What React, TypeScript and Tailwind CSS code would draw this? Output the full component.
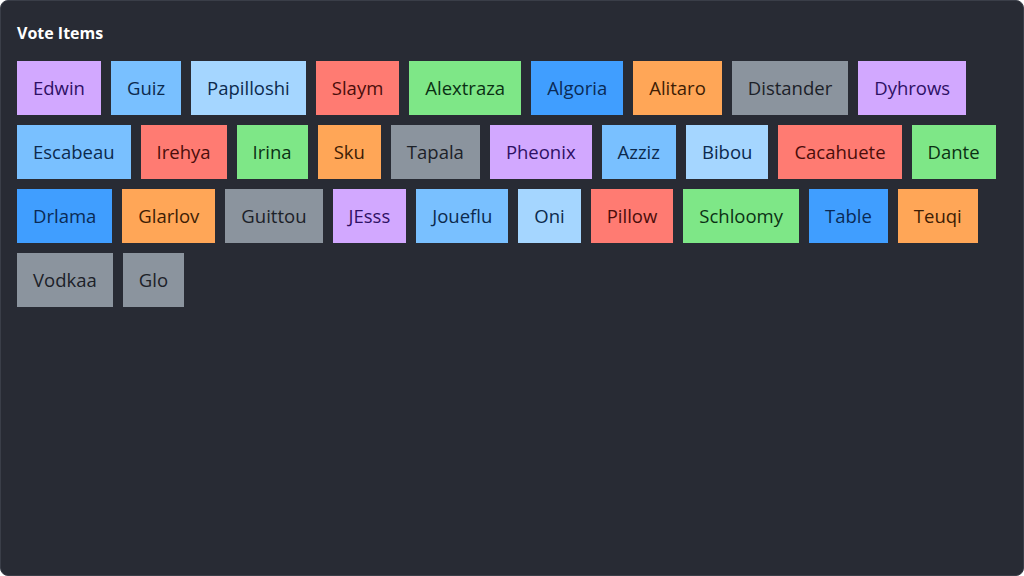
const palette = {
  purple: "bg-[#d2a8ff] text-[#2e1065]",
  sky: "bg-[#79c0ff] text-[#0c2a4d]",
  pale: "bg-[#a5d6ff] text-[#0c2a4d]",
  red: "bg-[#ff7b72] text-[#4a0d0a]",
  green: "bg-[#7ee787] text-[#0b3014]",
  blue: "bg-[#409eff] text-[#0a2a55]",
  orange: "bg-[#ffa657] text-[#3d1d05]",
  gray: "bg-[#8b949e] text-[#1c2128]",
};

type Tone = keyof typeof palette;

const items: { name: string; tone: Tone }[] = [
  { name: "Edwin", tone: "purple" },
  { name: "Guiz", tone: "sky" },
  { name: "Papilloshi", tone: "pale" },
  { name: "Slaym", tone: "red" },
  { name: "Alextraza", tone: "green" },
  { name: "Algoria", tone: "blue" },
  { name: "Alitaro", tone: "orange" },
  { name: "Distander", tone: "gray" },
  { name: "Dyhrows", tone: "purple" },
  { name: "Escabeau", tone: "sky" },
  { name: "Irehya", tone: "red" },
  { name: "Irina", tone: "green" },
  { name: "Sku", tone: "orange" },
  { name: "Tapala", tone: "gray" },
  { name: "Pheonix", tone: "purple" },
  { name: "Azziz", tone: "sky" },
  { name: "Bibou", tone: "pale" },
  { name: "Cacahuete", tone: "red" },
  { name: "Dante", tone: "green" },
  { name: "Drlama", tone: "blue" },
  { name: "Glarlov", tone: "orange" },
  { name: "Guittou", tone: "gray" },
  { name: "JEsss", tone: "purple" },
  { name: "Joueflu", tone: "sky" },
  { name: "Oni", tone: "pale" },
  { name: "Pillow", tone: "red" },
  { name: "Schloomy", tone: "green" },
  { name: "Table", tone: "blue" },
  { name: "Teuqi", tone: "orange" },
  { name: "Vodkaa", tone: "gray" },
  { name: "Glo", tone: "gray" },
];

export default function App() {
  return (
    <div className="h-screen w-full overflow-hidden rounded-lg border border-[#3a3e48] bg-[#282b34] px-4 pt-5 font-['Open_Sans','Noto_Sans',sans-serif]">
      {/* header */}
      <h1 className="mb-4 text-[16px] font-bold leading-6 text-white">
        Vote Items
      </h1>

      {/* tiles */}
      <div className="flex flex-wrap gap-2.5">
        {items.map((item) => (
          <div
            key={item.name}
            className={`px-4 text-[18.5px] leading-[54px] ${palette[item.tone]}`}
          >
            {item.name}
          </div>
        ))}
      </div>
    </div>
  );
}
